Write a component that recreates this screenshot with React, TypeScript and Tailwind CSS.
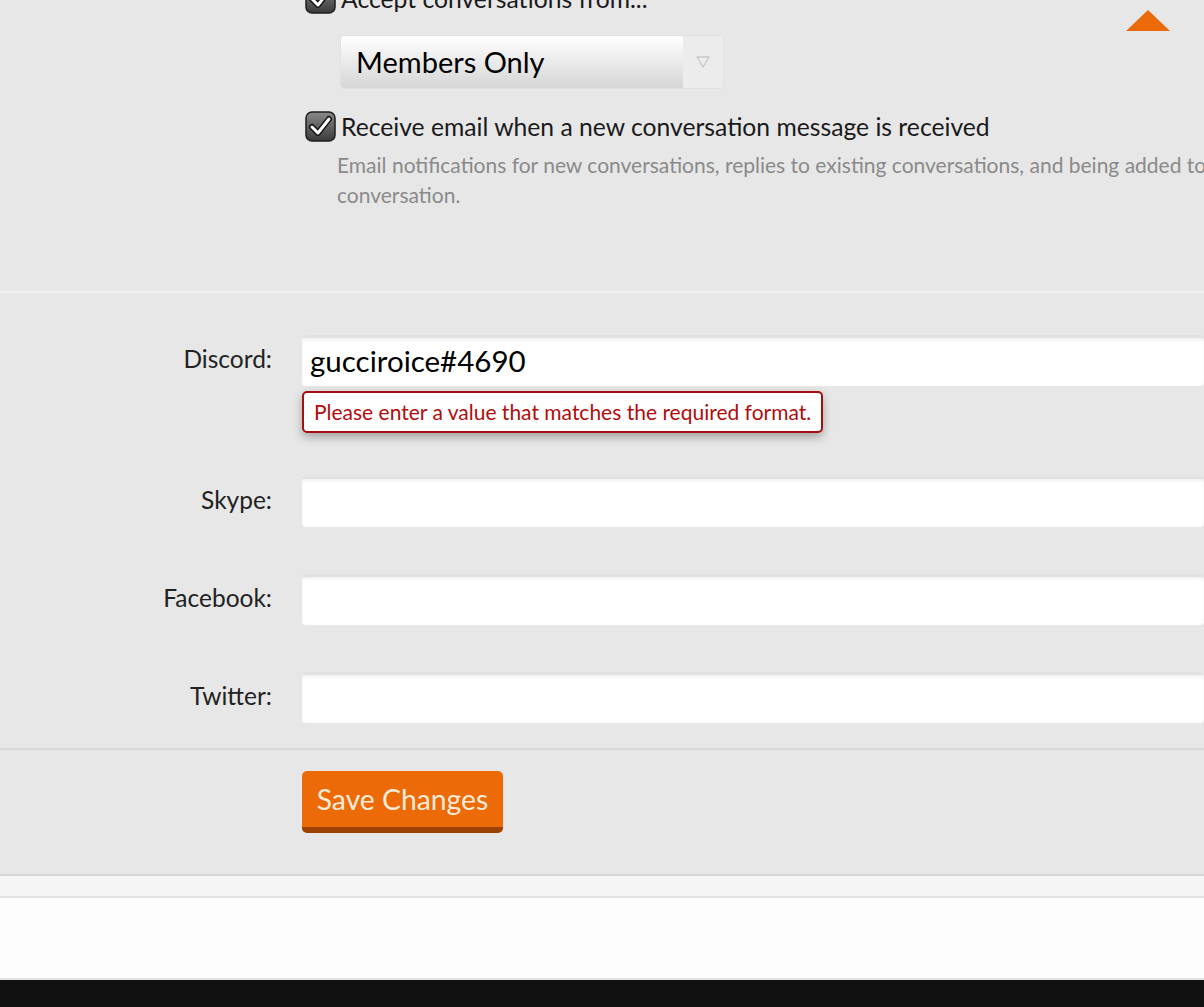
import React from 'react';

const font = { fontFamily: 'Lato, "Noto Sans", sans-serif' };

const CheckBox: React.FC = () => (
  <svg width="31" height="31" viewBox="0 0 31 31" className="shrink-0">
    <defs>
      <linearGradient id="cbg" x1="0" y1="0" x2="0" y2="1">
        <stop offset="0" stopColor="#8a8a8a" />
        <stop offset="1" stopColor="#3a3a3a" />
      </linearGradient>
    </defs>
    <rect x="1" y="1" width="29" height="29" rx="6" fill="url(#cbg)" stroke="#1e1e1e" strokeWidth="1.5" />
    <path d="M7 16 L13 22 L24 8" fill="none" stroke="#111" strokeWidth="6" strokeLinecap="round" strokeLinejoin="round" />
    <path d="M7 16 L13 22 L24 8" fill="none" stroke="#fff" strokeWidth="3" strokeLinecap="round" strokeLinejoin="round" />
  </svg>
);

const TextRow: React.FC<{ label: string; value?: string; children?: React.ReactNode }> = ({ label, value, children }) => (
  <div className="flex">
    <div className="w-[272px] shrink-0 text-right text-[24.5px] text-[#222] leading-[48px]">{label}</div>
    <div className="ml-[30px] flex-1 min-w-0">
      <div className="h-[51px] rounded-[4px] bg-white border-t-[3px] border-[#e2e2e2] shadow-[inset_0_2px_3px_rgba(0,0,0,0.06)] pl-2 text-[29.5px] text-black leading-[46px]">
        {value}
      </div>
      {children}
    </div>
  </div>
);

export default function App() {
  return (
    <div className="min-h-screen bg-[#e7e7e7] overflow-hidden" style={font}>
      <div className="relative">
        <div className="absolute right-[34px] top-[27px] w-0 h-0 border-l-[22px] border-r-[22px] border-b-[21px] border-l-transparent border-r-transparent border-b-[#ec6a0a]" />
        <section className="pl-[305px] -mt-[17px] h-[310px] border-b-2 border-[#f0f0f0]">
          <label className="flex items-center h-[31px] gap-[5px] text-[24.7px] text-[#1a1a1a] whitespace-nowrap">
            <CheckBox />
            <span>Accept conversations from...</span>
          </label>
          <div className="ml-[36px] mt-[22px] w-[382px] h-[52px] flex rounded-[4px] overflow-hidden shadow-[0_0_0_1px_#e2e2e2]">
            <div className="w-[342px] bg-gradient-to-b from-white to-[#d6d6d6] pl-[15px] text-[29px] text-black leading-[52px]">
              Members Only
            </div>
            <div className="flex-1 bg-[#ececec] flex items-center justify-center">
              <svg width="14" height="12" viewBox="0 0 14 12">
                <path d="M1 1 L7 11 L13 1 Z" fill="none" stroke="#c8c8c8" strokeWidth="1.3" />
              </svg>
            </div>
          </div>
          <label className="mt-[23px] flex items-center h-[31px] gap-[5px] text-[24.7px] text-[#1a1a1a] whitespace-nowrap">
            <CheckBox />
            <span>Receive email when a new conversation message is received</span>
          </label>
          <p className="ml-[32px] mt-[8px] text-[21px] leading-[30px] text-[#8a8a8a] whitespace-nowrap">
            Email notifications for new conversations, replies to existing conversations, and being added to a
            <br />
            conversation.
          </p>
        </section>

        <section className="pt-[42px] pb-[25px] border-b-2 border-[#d9d9d9]">
          <TextRow label="Discord:" value="gucciroice#4690">
            <div className="mt-[5px] mb-[43px] inline-block rounded-[5px] border-2 border-[#a50f0f] bg-white px-[10px] h-[42px] leading-[38px] text-[21px] text-[#b00d0d] shadow-[0_4px_10px_rgba(0,0,0,0.3)]">
              Please enter a value that matches the required format.
            </div>
          </TextRow>
          <div className="flex flex-col gap-[47px]">
            <TextRow label="Skype:" />
            <TextRow label="Facebook:" />
            <TextRow label="Twitter:" />
          </div>
        </section>

        <section className="pt-[21px] pb-[41px] pl-[302px] border-b-2 border-[#d6d6d6]">
          <button className="w-[201px] h-[62px] rounded-[5px] bg-[#ec6a08] border-b-[6px] border-[#9e4203] text-[28.3px] text-[#fdebd8] leading-[56px]">
            Save Changes
          </button>
        </section>

        <div className="h-[22px] bg-[#f5f5f5] border-b-2 border-[#e3e3e3]" />
        <div className="h-[82px] bg-[#fdfdfd] border-b-2 border-[#e3e3e3]" />
        <div className="h-[60px] bg-[#111111]" />
      </div>
    </div>
  );
}
